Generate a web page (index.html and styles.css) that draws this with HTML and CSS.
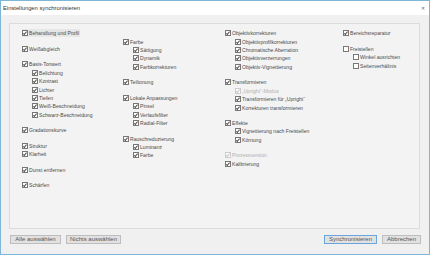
FILE: index.html
```html
<!DOCTYPE html>
<html lang="de">
<head>
    <meta charset="UTF-8">
    <title>Einstellungen synchronisieren</title>
    <link rel="stylesheet" href="styles.css">
</head>
<body>
<div class="window">
    <div class="titlebar">
        <span class="title">Einstellungen synchronisieren</span>
        <span class="close">&#x2715;</span>
    </div>
    <div class="panel">
        <div class="column col1">
            <div class="group">
                <label class="item focus"><span class="box on"></span>Behandlung und Profil</label>
            </div>
            <div class="group">
                <label class="item"><span class="box on"></span>Weißabgleich</label>
            </div>
            <div class="group">
                <label class="item"><span class="box on"></span>Basis-Tonwert</label>
                <div class="sub">
                    <label class="item"><span class="box on"></span>Belichtung</label>
                    <label class="item"><span class="box on"></span>Kontrast</label>
                    <label class="item"><span class="box on"></span>Lichter</label>
                    <label class="item"><span class="box on"></span>Tiefen</label>
                    <label class="item"><span class="box on"></span>Weiß-Beschneidung</label>
                    <label class="item"><span class="box on"></span>Schwarz-Beschneidung</label>
                </div>
            </div>
            <div class="group">
                <label class="item"><span class="box on"></span>Gradationskurve</label>
            </div>
            <div class="group">
                <label class="item"><span class="box on"></span>Struktur</label>
                <label class="item"><span class="box on"></span>Klarheit</label>
            </div>
            <div class="group">
                <label class="item"><span class="box on"></span>Dunst entfernen</label>
            </div>
            <div class="group">
                <label class="item"><span class="box on"></span>Schärfen</label>
            </div>
        </div>

        <div class="column col2">
            <div class="group">
                <label class="item"><span class="box on"></span>Farbe</label>
                <div class="sub">
                    <label class="item"><span class="box on"></span>Sättigung</label>
                    <label class="item"><span class="box on"></span>Dynamik</label>
                    <label class="item"><span class="box on"></span>Farbkorrekturen</label>
                </div>
            </div>
            <div class="group">
                <label class="item"><span class="box on"></span>Teiltonung</label>
            </div>
            <div class="group">
                <label class="item"><span class="box on"></span>Lokale Anpassungen</label>
                <div class="sub">
                    <label class="item"><span class="box on"></span>Pinsel</label>
                    <label class="item"><span class="box on"></span>Verlaufsfilter</label>
                    <label class="item"><span class="box on"></span>Radial-Filter</label>
                </div>
            </div>
            <div class="group">
                <label class="item"><span class="box on"></span>Rauschreduzierung</label>
                <div class="sub">
                    <label class="item"><span class="box on"></span>Luminanz</label>
                    <label class="item"><span class="box on"></span>Farbe</label>
                </div>
            </div>
        </div>

        <div class="column col3">
            <div class="group">
                <label class="item"><span class="box on"></span>Objektivkorrekturen</label>
                <div class="sub">
                    <label class="item"><span class="box on"></span>Objektivprofilkorrekturen</label>
                    <label class="item"><span class="box on"></span>Chromatische Aberration</label>
                    <label class="item"><span class="box on"></span>Objektivverzerrungen</label>
                    <label class="item"><span class="box on"></span>Objektiv-Vignettierung</label>
                </div>
            </div>
            <div class="group">
                <label class="item"><span class="box on"></span>Transformieren</label>
                <div class="sub">
                    <label class="item disabled"><span class="box on"></span>„Upright“-Modus</label>
                    <label class="item"><span class="box on"></span>Transformieren für „Upright“</label>
                    <label class="item"><span class="box on"></span>Korrekturen transformieren</label>
                </div>
            </div>
            <div class="group">
                <label class="item"><span class="box on"></span>Effekte</label>
                <div class="sub">
                    <label class="item"><span class="box on"></span>Vignettierung nach Freistellen</label>
                    <label class="item"><span class="box on"></span>Körnung</label>
                </div>
            </div>
            <div class="group">
                <label class="item disabled"><span class="box on"></span>Prozessversion</label>
                <label class="item"><span class="box on"></span>Kalibrierung</label>
            </div>
        </div>

        <div class="column col4">
            <div class="group">
                <label class="item"><span class="box on"></span>Bereichsreparatur</label>
            </div>
            <div class="group">
                <label class="item"><span class="box"></span>Freistellen</label>
                <div class="sub">
                    <label class="item"><span class="box"></span>Winkel ausrichten</label>
                    <label class="item"><span class="box"></span>Seitenverhältnis</label>
                </div>
            </div>
        </div>
    </div>
    <div class="footer">
        <div class="buttons">
            <button class="btn btn-all">Alle auswählen</button>
            <button class="btn btn-none">Nichts auswählen</button>
        </div>
        <div class="buttons">
            <button class="btn btn-sync primary">Synchronisieren</button>
            <button class="btn btn-cancel">Abbrechen</button>
        </div>
    </div>
</div>
</body>
</html>
```

FILE: styles.css
```css
body {
    margin: 0;
    padding: 0;
    background-color: #ffffff;
    font-family: "Liberation Sans", Arial, sans-serif;
}
.window {
    width: 430px;
    height: 255px;
    box-sizing: border-box;
    border: 1px solid #7fb6d8;
    background-color: #f0f0f0;
    display: flex;
    flex-direction: column;
}
.titlebar {
    height: 14px;
    background-color: white;
    display: flex;
    align-items: center;
    justify-content: space-between;
    padding: 0 4px 0 2px;
}
.title {
    font-size: 5.8px;
    color: #333;
}
.close {
    font-size: 5px;
    color: #666;
}
.panel {
    margin: 8px 9px 0 8px;
    height: 206px;
    box-sizing: border-box;
    border: 1px solid #dcdcdc;
    background-color: #f3f3f3;
    display: flex;
    padding: 5px 0 0 12px;
}
.column {
    display: flex;
    flex-direction: column;
    gap: 7.2px;
}
.col1 { width: 101px; }
.col2 { width: 102px; margin-top: 8.4px; }
.col3 { width: 118px; }
.col4 { flex: 1; }
.group {
    display: flex;
    flex-direction: column;
}
.sub {
    display: flex;
    flex-direction: column;
    padding-left: 10px;
}
.item {
    height: 8.4px;
    display: flex;
    align-items: center;
    font-size: 5.1px;
    color: #4a4a4a;
    white-space: nowrap;
}
.item.focus {
    align-self: flex-start;
    background-color: #e6e6e6;
    padding-right: 1px;
}
.item.disabled {
    color: #b0b0b0;
}
.box {
    width: 6px;
    height: 6px;
    box-sizing: border-box;
    border: 1px solid #777;
    background-color: white;
    margin-right: 1px;
    position: relative;
    flex-shrink: 0;
}
.item.disabled .box {
    border-color: #cccccc;
}
.box.on::after {
    content: "";
    position: absolute;
    left: 1.3px;
    top: 0;
    width: 1.4px;
    height: 2.6px;
    border-right: 0.7px solid #555;
    border-bottom: 0.7px solid #555;
    transform: rotate(40deg);
}
.item.disabled .box.on::after {
    border-color: #c4c4c4;
}
.footer {
    display: flex;
    justify-content: space-between;
    padding: 6px 8px 0 9px;
}
.buttons {
    display: flex;
    gap: 5px;
}
.btn {
    height: 9px;
    padding: 0;
    font-family: "Liberation Sans", Arial, sans-serif;
    font-size: 6px;
    color: #555;
    background-color: #e1e1e1;
    border: 1px solid #bdbdbd;
    line-height: 7px;
}
.btn-all { width: 51px; }
.btn-none { width: 55px; }
.btn-sync { width: 53px; }
.btn-cancel { width: 39px; }
.btn.primary {
    border-color: #6aa5dc;
}
```
